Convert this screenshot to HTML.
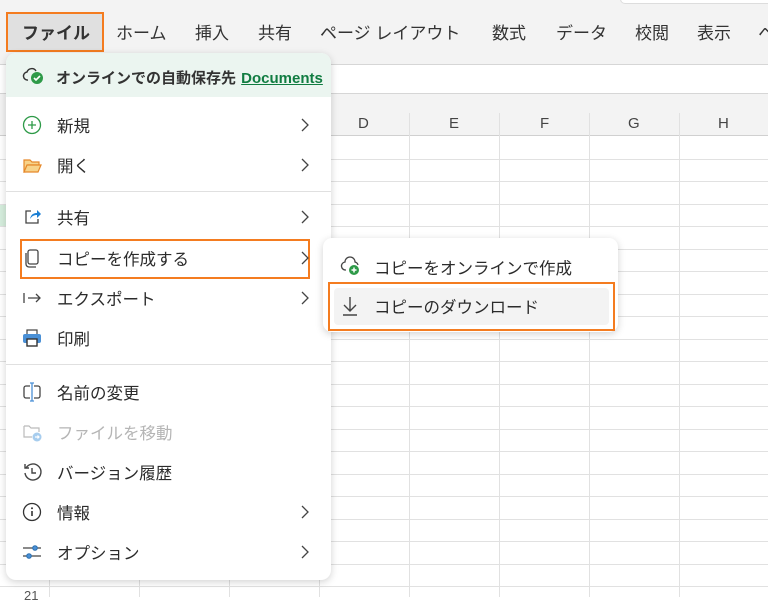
<!DOCTYPE html>
<html><head><meta charset="utf-8"><style>
*{margin:0;padding:0;box-sizing:border-box}
body{width:768px;height:597px;overflow:hidden;background:#fff;font-family:"Liberation Sans","Noto Sans CJK JP",sans-serif;color:#2b2b2b;position:relative}
.abs{position:absolute}
.tab{position:absolute;top:23px;font-size:17px;color:#333;line-height:22px}
.item{position:absolute;left:6px;width:325px;height:40px;display:flex;align-items:center;font-size:16.5px}
.item .ic{position:absolute;left:16px;top:10px;width:20px;height:20px}
.item .tx{position:absolute;left:51px}
.chev{position:absolute;left:294px;top:12px;width:10px;height:16px}
.vl{position:absolute;top:113px;bottom:0;width:1px;background:#e1e1e1}
.hl{position:absolute;left:0;right:0;height:1px;background:#e1e1e1}
</style></head><body>
<div class="abs" style="left:0;top:0;width:768px;height:64px;background:#f3f3f3"></div>
<div class="abs" style="left:620px;top:-6px;width:160px;height:10px;background:#fff;border:1px solid #ddd;border-radius:6px"></div>
<div class="abs" style="left:6px;top:12px;width:98px;height:40px;background:#e0e0e0;border:2px solid #f47c20"></div>
<div class="tab" style="left:22px;font-weight:bold">ファイル</div>
<div class="tab" style="left:116px">ホーム</div>
<div class="tab" style="left:195px">挿入</div>
<div class="tab" style="left:258px">共有</div>
<div class="tab" style="left:320px">ページ レイアウト</div>
<div class="tab" style="left:492px">数式</div>
<div class="tab" style="left:556px">データ</div>
<div class="tab" style="left:635px">校閲</div>
<div class="tab" style="left:697px">表示</div>
<div class="tab" style="left:758px">ヘ</div>
<div class="abs" style="left:0;top:64px;width:768px;height:1px;background:#d6d6d6"></div>
<div class="abs" style="left:0;top:93px;width:768px;height:43px;background:#f3f3f3;border-top:1px solid #d6d6d6;border-bottom:1px solid #d0d0d0"></div>
<div class="abs" style="left:0;top:204px;width:50px;height:22px;background:#d6eedd"></div>
<div class="abs" style="top:115px;left:358px;font-size:15px;color:#444">D</div>
<div class="abs" style="top:115px;left:449px;font-size:15px;color:#444">E</div>
<div class="abs" style="top:115px;left:540px;font-size:15px;color:#444">F</div>
<div class="abs" style="top:115px;left:628px;font-size:15px;color:#444">G</div>
<div class="abs" style="top:115px;left:718px;font-size:15px;color:#444">H</div>
<div class="vl" style="left:49px"></div><div class="vl" style="left:139px"></div><div class="vl" style="left:229px"></div><div class="vl" style="left:319px"></div><div class="vl" style="left:409px"></div><div class="vl" style="left:499px"></div><div class="vl" style="left:589px"></div><div class="vl" style="left:679px"></div>
<div class="hl" style="top:159px"></div><div class="hl" style="top:181px"></div><div class="hl" style="top:204px"></div><div class="hl" style="top:226px"></div><div class="hl" style="top:249px"></div><div class="hl" style="top:271px"></div><div class="hl" style="top:294px"></div><div class="hl" style="top:316px"></div><div class="hl" style="top:339px"></div><div class="hl" style="top:361px"></div><div class="hl" style="top:384px"></div><div class="hl" style="top:406px"></div><div class="hl" style="top:429px"></div><div class="hl" style="top:451px"></div><div class="hl" style="top:474px"></div><div class="hl" style="top:496px"></div><div class="hl" style="top:519px"></div><div class="hl" style="top:541px"></div><div class="hl" style="top:564px"></div><div class="hl" style="top:586px"></div>
<div class="abs" style="left:24px;top:588px;font-size:13px;color:#555">21</div>
<div class="abs" style="left:6px;top:53px;width:325px;height:527px;background:#fff;border-radius:10px;box-shadow:0 2px 8px rgba(0,0,0,.18);overflow:hidden">
<div style="height:44px;background:#ebf5f0"></div>
<div style="position:absolute;left:0;right:0;top:138px;height:1px;background:#e0e0e0"></div>
<div style="position:absolute;left:0;right:0;top:311px;height:1px;background:#e0e0e0"></div>
</div>
<svg class="abs" style="left:22px;top:66px" width="24" height="20" viewBox="0 0 24 20"><path d="M6 14 A4 4 0 0 1 5 6 A5 5 0 0 1 14 5" fill="none" stroke="#333" stroke-width="1.4"/><circle cx="15" cy="12" r="6" fill="#2e9a48"/><path d="M12 12l2 2 4-4" stroke="#fff" stroke-width="1.6" fill="none"/></svg>
<div class="abs" style="left:56px;top:67px;font-size:15px;font-weight:bold;color:#333">オンラインでの自動保存先 <span style="color:#107c41;text-decoration:underline;margin-left:1px">Documents</span></div>
<div class="item" style="top:105px"><svg class="ic" viewBox="0 0 20 20"><circle cx="10" cy="10" r="8.5" fill="none" stroke="#2e9a48" stroke-width="1.3"/><path d="M10 6v8M6 10h8" stroke="#2e9a48" stroke-width="1.3"/></svg><span class="tx">新規</span><svg class="chev" viewBox="0 0 10 16"><path d="M2 2l6 6-6 6" fill="none" stroke="#444" stroke-width="1.3"/></svg></div>
<div class="item" style="top:145px"><svg class="ic" viewBox="0 0 20 20"><path d="M2 5h6l2 2h7v3H6l-3 7H2z" fill="#f7d38a" stroke="#e6892a" stroke-width="1.2"/><path d="M5 10h14l-3 7H2z" fill="#f7d38a" stroke="#e6892a" stroke-width="1.2"/></svg><span class="tx">開く</span><svg class="chev" viewBox="0 0 10 16"><path d="M2 2l6 6-6 6" fill="none" stroke="#444" stroke-width="1.3"/></svg></div>
<div class="item" style="top:197px"><svg class="ic" viewBox="0 0 20 20"><path d="M9 4H4v12h12v-4" fill="none" stroke="#444" stroke-width="1.3"/><path d="M8 12c1-5 4-6 7-6V3l4 4-4 4V8c-3 0-5 1-7 4z" fill="#1a7fd4"/></svg><span class="tx">共有</span><svg class="chev" viewBox="0 0 10 16"><path d="M2 2l6 6-6 6" fill="none" stroke="#444" stroke-width="1.3"/></svg></div>
<div class="abs" style="left:20px;top:239px;width:290px;height:40px;border:2px solid #f47c20"></div>
<div class="item" style="top:238px"><svg class="ic" viewBox="0 0 20 20"><rect x="6" y="2" width="10" height="14" rx="2" fill="none" stroke="#444" stroke-width="1.3"/><path d="M4 5v11a3 3 0 0 0 3 3h7" fill="none" stroke="#444" stroke-width="1.3"/></svg><span class="tx">コピーを作成する</span><svg class="chev" viewBox="0 0 10 16"><path d="M2 2l6 6-6 6" fill="none" stroke="#444" stroke-width="1.3"/></svg></div>
<div class="item" style="top:278px"><svg class="ic" viewBox="0 0 20 20"><path d="M2 5v10M6 10h12M14 6l4 4-4 4" fill="none" stroke="#444" stroke-width="1.3"/></svg><span class="tx">エクスポート</span><svg class="chev" viewBox="0 0 10 16"><path d="M2 2l6 6-6 6" fill="none" stroke="#444" stroke-width="1.3"/></svg></div>
<div class="item" style="top:318px"><svg class="ic" viewBox="0 0 20 20"><rect x="5" y="2" width="10" height="5" fill="#fff" stroke="#444" stroke-width="1.2"/><rect x="1" y="6" width="18" height="9" rx="2" fill="#4a90d6"/><rect x="5" y="11" width="10" height="7" fill="#fff" stroke="#333" stroke-width="1.4"/></svg><span class="tx">印刷</span></div>
<div class="item" style="top:372px"><svg class="ic" viewBox="0 0 20 20"><path d="M8 4H4a2 2 0 0 0-2 2v8a2 2 0 0 0 2 2h4M12 4h4a2 2 0 0 1 2 2v8a2 2 0 0 1-2 2h-4" fill="none" stroke="#444" stroke-width="1.3"/><path d="M10 1v18M8 1h4M8 19h4" stroke="#4a90d6" stroke-width="1.3"/></svg><span class="tx">名前の変更</span></div>
<div class="item" style="top:412px;color:#b5b5b5"><svg class="ic" viewBox="0 0 20 20"><path d="M2 4h5l2 2h8v4M2 4v11h8" fill="none" stroke="#bbb" stroke-width="1.2"/><circle cx="15" cy="15" r="4.5" fill="#a7cdee"/><path d="M13 15h4M15.5 13.5l1.5 1.5-1.5 1.5" stroke="#fff" stroke-width="1.2" fill="none"/></svg><span class="tx">ファイルを移動</span></div>
<div class="item" style="top:452px"><svg class="ic" viewBox="0 0 20 20"><path d="M4 6a8 8 0 1 1-1 5M3 2v4h4" fill="none" stroke="#444" stroke-width="1.4"/><path d="M10 6v5h4" fill="none" stroke="#444" stroke-width="1.4"/></svg><span class="tx">バージョン履歴</span></div>
<div class="item" style="top:492px"><svg class="ic" viewBox="0 0 20 20"><circle cx="10" cy="10" r="8.5" fill="none" stroke="#333" stroke-width="1.3"/><path d="M10 9v5" stroke="#333" stroke-width="1.6"/><circle cx="10" cy="6.3" r="1" fill="#333"/></svg><span class="tx">情報</span><svg class="chev" viewBox="0 0 10 16"><path d="M2 2l6 6-6 6" fill="none" stroke="#444" stroke-width="1.3"/></svg></div>
<div class="item" style="top:532px"><svg class="ic" viewBox="0 0 20 20"><path d="M1 6h18M1 14h18" stroke="#444" stroke-width="1.3"/><circle cx="13" cy="6" r="2.3" fill="#4a90d6" stroke="#2a6fb0"/><circle cx="7" cy="14" r="2.3" fill="#4a90d6" stroke="#2a6fb0"/></svg><span class="tx">オプション</span><svg class="chev" viewBox="0 0 10 16"><path d="M2 2l6 6-6 6" fill="none" stroke="#444" stroke-width="1.3"/></svg></div>
<div class="abs" style="left:323px;top:238px;width:295px;height:94px;background:#fff;border-radius:9px;box-shadow:0 2px 8px rgba(0,0,0,.18)"></div>
<svg class="abs" style="left:340px;top:256px" width="22" height="20" viewBox="0 0 22 20"><path d="M6 14A4 4 0 0 1 5 6a5 5 0 0 1 10 0 4 4 0 0 1 3 3" fill="none" stroke="#444" stroke-width="1.3"/><circle cx="14" cy="14" r="5" fill="#2e9a48"/><path d="M14 11.5v5M11.5 14h5" stroke="#fff" stroke-width="1.5"/></svg>
<div class="abs" style="left:374px;top:255px;font-size:16.5px">コピーをオンラインで作成</div>
<div class="abs" style="left:328px;top:282px;width:287px;height:49px;border:2px solid #f47c20;padding:4px"><div style="width:100%;height:100%;background:#f3f3f3;border-radius:4px"></div></div>
<svg class="abs" style="left:340px;top:295px" width="20" height="22" viewBox="0 0 20 22"><path d="M10 2v14M4 10l6 6 6-6M3 20h14" fill="none" stroke="#444" stroke-width="1.4"/></svg>
<div class="abs" style="left:374px;top:294px;font-size:16.5px">コピーのダウンロード</div>
</body></html>
